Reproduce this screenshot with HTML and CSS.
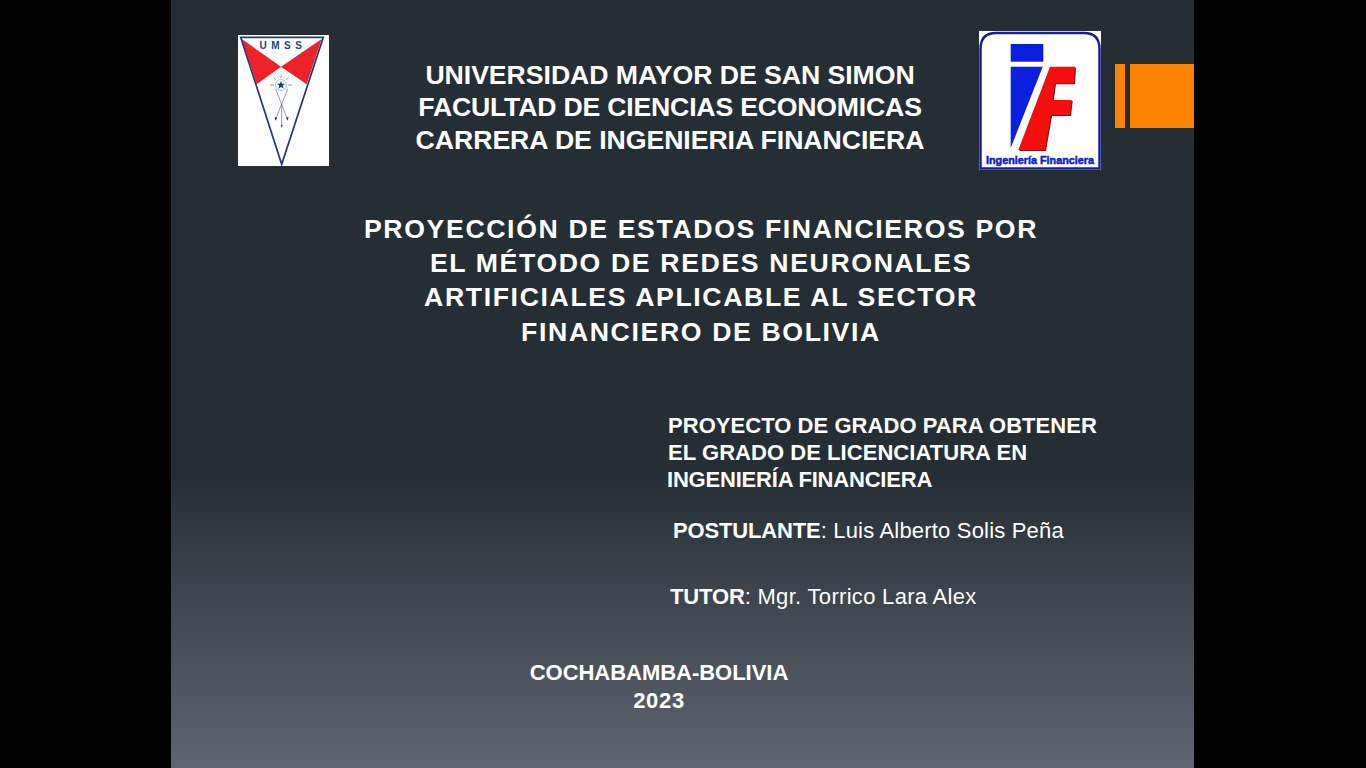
FILE: index.html
```html
<!DOCTYPE html>
<html lang="es">
<head>
<meta charset="utf-8">
<title>Proyección de estados financieros</title>
<link rel="stylesheet" href="styles.css">
</head>
<body>
<main class="slide">
  <svg class="logo logo-umss" viewBox="0 0 91 131" aria-label="UMSS">
    <rect width="91" height="131" fill="#fff"/>
    <path d="M3.700 4L43 31.700L18.700 49.300Z" fill="#ee2229"/>
    <path d="M83.700 4L43 31.700L68.700 49.300Z" fill="#ee2229"/>
    <path d="M2.700 2.300H85.300L43.700 129.300Z" fill="none" stroke="#1f3a78" stroke-width="1.700"/>
    <text x="45" y="14" class="umss-text" text-anchor="middle">UMSS</text>
    <circle cx="43" cy="50" r="5.500" fill="none" stroke="#8a97b8" stroke-width=".6"/>
    <path d="M43 46l1.100 2.800h3l-2.400 1.900 1 3-2.700-1.800-2.700 1.800 1-3-2.400-1.900h3z" fill="#1f3a78"/>
    <path d="M37.700 54L49.300 84M49.700 54L37.700 84M43.700 69V91M36 50H32M50 50H54M38 45L35.500 42.500M48 45L50.500 42.500M43 43V39.500" fill="none" stroke="#4a5d90" stroke-width=".6"/>
    <path d="M36.500 82l1 3.800 1.800-3zM48 82.500l1.500 3.300 1.200-3.800zM42.700 90h2l-1 3z" fill="#1f3a78"/>
  </svg>

  <h1 class="text heading">UNIVERSIDAD MAYOR DE SAN SIMON<br><span class="heading-tight">FACULTAD DE CIENCIAS ECONOMICAS</span><br>CARRERA DE INGENIERIA FINANCIERA</h1>

  <svg class="logo logo-if" viewBox="0 0 122 139" aria-label="Ingeniería Financiera">
    <rect width="122" height="139" fill="#fff"/>
    <path d="M1.500 137.500V18Q1.500 2 17 2H105Q120.500 2 120.500 18V137.500Z" fill="none" stroke="#13209a" stroke-width="2.500"/>
    <rect x="31.700" y="13" width="32.600" height="17.700" fill="#0a1fe0"/>
    <path d="M31.700 35.700H63.700L31.700 117Z" fill="#0a1fe0"/>
    <path d="M72 36.700H97L96 53.300H77L74.700 70H93.700L92 85H73L67 120H40.300Z" fill="#8c1010"/>
    <path d="M71 35.700H96L95 52.300H76L73.700 69H92.700L91 84H72L66 119H39.300Z" fill="#f60d0d"/>
    <text x="61" y="132.500" class="if-text" text-anchor="middle" textLength="108" lengthAdjust="spacingAndGlyphs">Ingeniería Financiera</text>
  </svg>

  <div class="accent">
    <span class="accent-thin"></span>
    <span class="accent-wide"></span>
  </div>

  <h2 class="text title">PROYECCIÓN DE ESTADOS FINANCIEROS POR<br>EL MÉTODO DE REDES NEURONALES<br>ARTIFICIALES APLICABLE AL SECTOR<br>FINANCIERO DE BOLIVIA</h2>

  <p class="text degree">PROYECTO DE GRADO PARA OBTENER<br>EL GRADO DE LICENCIATURA EN<br><span class="degree-last">INGENIERÍA FINANCIERA</span></p>
  <p class="text person postulante"><b>POSTULANTE</b>: Luis Alberto Solis Peña</p>
  <p class="text person tutor"><b>TUTOR</b>: Mgr. Torrico Lara Alex</p>
  <p class="text place">COCHABAMBA-BOLIVIA<br><span class="place-year">2023</span></p>
</main>
</body>
</html>
```
FILE: styles.css
```css
html, body {
  margin: 0;
  height: 100%;
  background: #000;
  overflow: hidden;
}
body {
  display: flex;
  justify-content: center;
}
.slide {
  position: relative;
  flex: none;
  width: 1023px;
  height: 768px;
  margin-right: 1px;
  background: linear-gradient(180deg, #262e35 0%, #262e35 62%, #5e6571 100%);
  font-family: "Liberation Sans", Arial, sans-serif;
  color: #fff;
}
.text {
  position: absolute;
  margin: 0;
  white-space: nowrap;
  font-weight: 700;
}
.logo { position: absolute; display: block; }
.logo-umss { left: 67px; top: 35px; width: 91px; height: 131px; }
.logo-if { left: 808px; top: 31px; width: 122px; height: 139px; }
.umss-text { font: 700 10px "Liberation Sans", Arial, sans-serif; letter-spacing: 4.500px; fill: #24457f; }
.if-text { font: 700 11px "Liberation Sans", Arial, sans-serif; fill: #0d22c8; stroke: #0d22c8; stroke-width: .5px; }
.accent {
  position: absolute;
  left: 944px;
  top: 64px;
  right: 0;
  height: 64px;
  display: flex;
  gap: 5px;
}
.accent-thin { width: 10px; background: #ff8300; }
.accent-wide { flex: 1; background: #ff8300; }
.heading {
  left: 195px;
  width: 608px;
  top: 58.700px;
  text-align: center;
  font-size: 26.670px;
  line-height: 32.500px;
  letter-spacing: -0.050px;
}
.heading-tight { letter-spacing: -0.210px; }
.title {
  left: 130px;
  width: 800px;
  top: 211.700px;
  text-align: center;
  font-size: 26.670px;
  line-height: 34.300px;
  letter-spacing: 1.620px;
}
.degree {
  left: 497px;
  top: 412px;
  font-size: 22px;
  line-height: 27px;
  letter-spacing: 0.050px;
}
.degree-last { margin-left: -1px; letter-spacing: -0.200px; }
.person {
  font-size: 22px;
  line-height: 27px;
  font-weight: 400;
  letter-spacing: 0.190px;
}
.person b { font-weight: 700; letter-spacing: -0.150px; }
.postulante { left: 502px; top: 517px; }
.tutor { left: 499px; top: 583px; letter-spacing: 0.310px; }
.place {
  left: 348px;
  width: 280px;
  top: 659px;
  text-align: center;
  font-size: 22px;
  line-height: 28px;
  letter-spacing: -0.030px;
}
.place-year { letter-spacing: 0.700px; }
```
